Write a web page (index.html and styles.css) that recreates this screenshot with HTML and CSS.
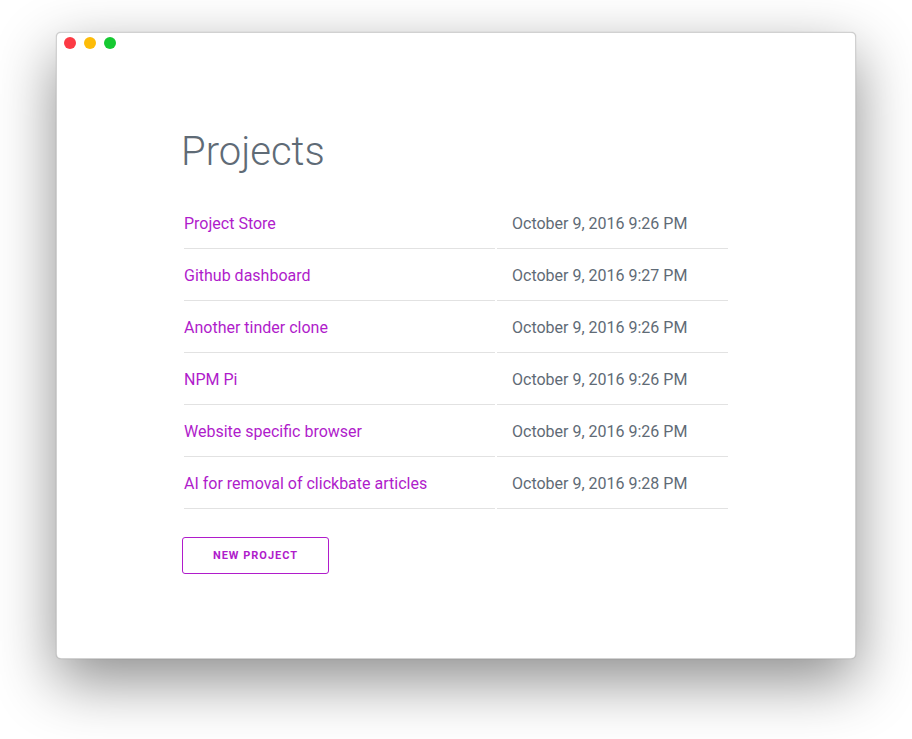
FILE: index.html
```html
<!DOCTYPE html>
<html>
<head>
<meta charset="utf-8">
<link rel="stylesheet" href="styles.css">
</head>
<body>
<div class="stage">
  <div class="window">
    <div class="titlebar">
      <span class="light red"></span>
      <span class="light yellow"></span>
      <span class="light green"></span>
    </div>
    <main class="content">
      <h1 class="title">Projects</h1>
      <div class="projects">
        <a class="name">Project Store</a><span class="date">October 9, 2016 9:26 PM</span>
        <a class="name">Github dashboard</a><span class="date">October 9, 2016 9:27 PM</span>
        <a class="name">Another tinder clone</a><span class="date">October 9, 2016 9:26 PM</span>
        <a class="name">NPM Pi</a><span class="date">October 9, 2016 9:26 PM</span>
        <a class="name">Website specific browser</a><span class="date">October 9, 2016 9:26 PM</span>
        <a class="name">AI for removal of clickbate articles</a><span class="date">October 9, 2016 9:28 PM</span>
      </div>
      <button class="new-btn">NEW PROJECT</button>
    </main>
  </div>
</div>
</body>
</html>
```

FILE: styles.css
```css
html, body {
  margin: 0;
  padding: 0;
  background: #ffffff;
}
body {
  width: 912px;
  height: 739px;
  overflow: hidden;
  font-family: Roboto, "Liberation Sans", sans-serif;
}
.stage {
  padding: 32px 0 0 56px;
}
.window {
  box-sizing: border-box;
  width: 800px;
  height: 627px;
  background: #ffffff;
  border-radius: 5px;
  border: 1px solid rgba(0,0,0,0.18);
  box-shadow: 0 22px 60px rgba(0,0,0,0.45), 0 0 1px rgba(0,0,0,0.3);
}
.titlebar {
  display: flex;
  gap: 8px;
  padding: 4px 0 0 7px;
  height: 20px;
}
.light {
  width: 12px;
  height: 12px;
  border-radius: 50%;
}
.red { background: #fc3a44; }
.yellow { background: #fdbc08; }
.green { background: #15c931; }
.content {
  padding: 70px 0 0 125px;
}
.title {
  margin: 0 0 20px -1px;
  font-size: 40px;
  line-height: 50px;
  font-weight: 300;
  color: #5f6b76;
}
.projects {
  display: grid;
  grid-template-columns: 311px 231px;
  column-gap: 2px;
  margin-left: 2px;
}
.name, .date {
  font-size: 16px;
  line-height: 19px;
  padding: 17px 0 15px;
  border-bottom: 1px solid #e2e2e2;
}
.name {
  color: #b01ccb;
  cursor: pointer;
}
.date {
  color: #5f6b76;
  padding-left: 15px;
}
.new-btn {
  margin-top: 28px;
  width: 147px;
  height: 37px;
  background: #ffffff;
  border: 1px solid #b01ccb;
  border-radius: 3px;
  color: #b01ccb;
  font-family: Roboto, "Liberation Sans", sans-serif;
  font-size: 11px;
  font-weight: 700;
  letter-spacing: 1px;
}
```
